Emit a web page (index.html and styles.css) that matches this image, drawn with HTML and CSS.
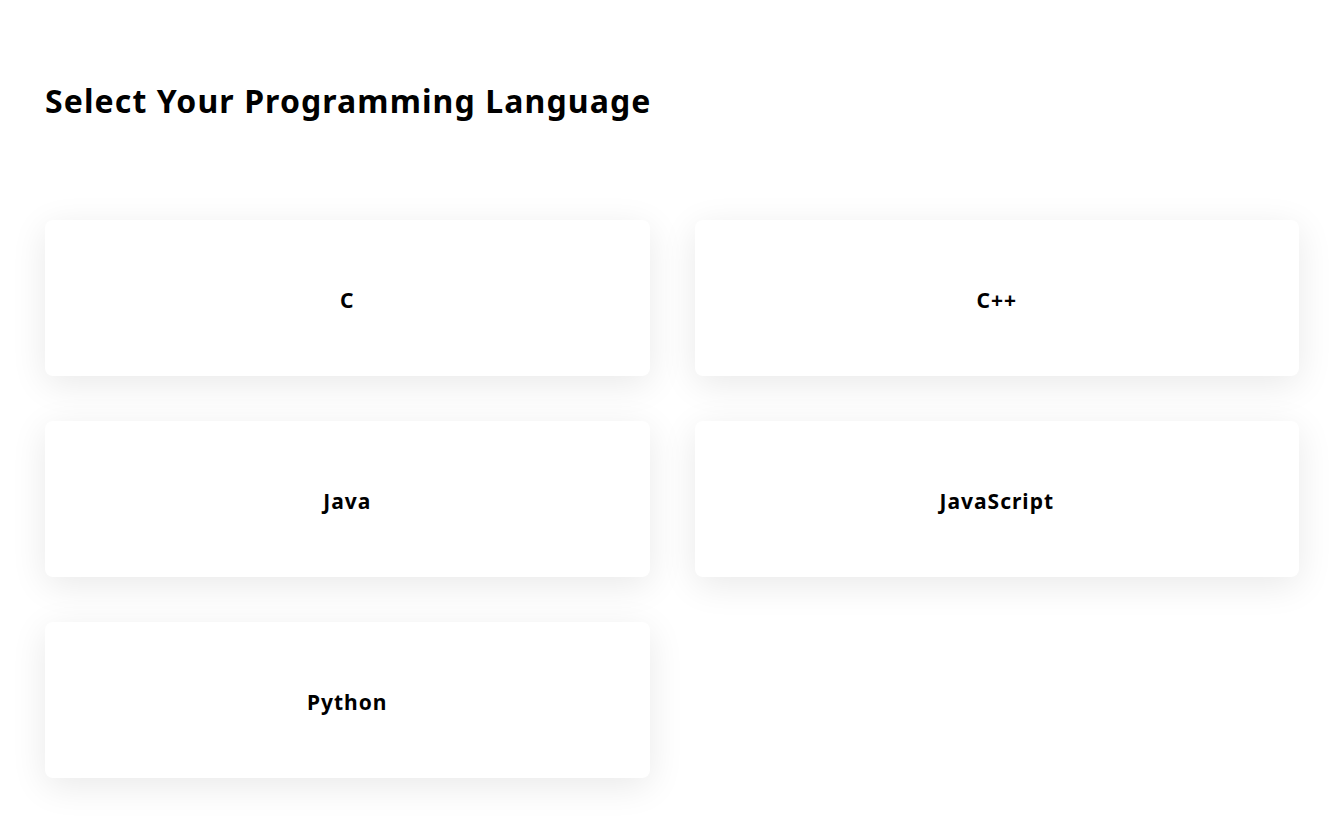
FILE: index.html
```html
<!DOCTYPE html>
<html lang="en">
<head>
<meta charset="utf-8">
<title>Select Your Programming Language</title>
<link rel="stylesheet" href="styles.css">
</head>
<body>
<main class="page">
  <h1 class="title">Select Your Programming Language</h1>
  <div class="grid">
    <div class="card">C</div>
    <div class="card">C++</div>
    <div class="card">Java</div>
    <div class="card">JavaScript</div>
    <div class="card">Python</div>
  </div>
</main>
</body>
</html>
```
FILE: styles.css
```css
html, body {
  margin: 0;
  padding: 0;
  background: #ffffff;
}
body {
  font-family: "Noto Sans", "Open Sans", "Liberation Sans", sans-serif;
  color: #000;
}
.page {
  padding: 78px 45px 45px;
}
.title {
  margin: 0;
  font-size: 32px;
  line-height: 46px;
  font-weight: 700;
  letter-spacing: 1.1px;
}
.grid {
  margin-top: 96px;
  display: grid;
  grid-template-columns: 1fr 1fr;
  gap: 45px;
}
.card {
  box-sizing: border-box;
  height: 156px;
  padding-top: 4px;
  background: #fff;
  border-radius: 8px;
  box-shadow: 0 8px 36px rgba(0, 0, 0, 0.09);
  display: flex;
  align-items: center;
  justify-content: center;
  font-size: 21px;
  font-weight: 700;
  letter-spacing: 1px;
}
```
